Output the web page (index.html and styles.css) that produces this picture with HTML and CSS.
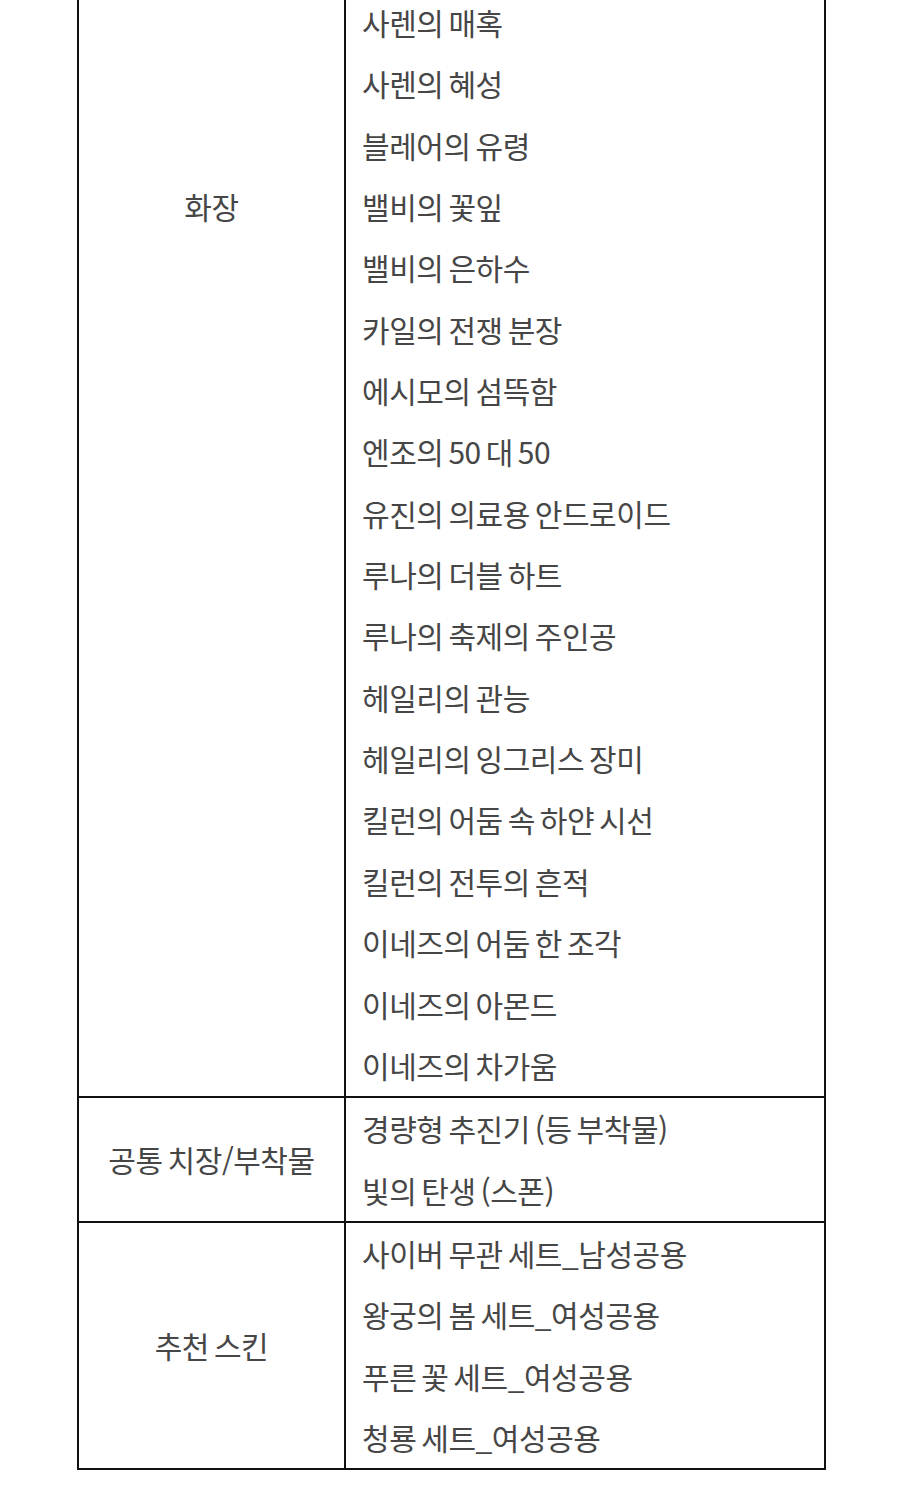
FILE: index.html
```html
<!DOCTYPE html>
<html lang="ko">
<head>
<meta charset="utf-8">
<link rel="stylesheet" href="styles.css">
</head>
<body>
<div class="table">
  <div class="row first">
    <div class="cat">화장</div>
    <div class="items">
      <div class="item">사렌의 매혹</div>
      <div class="item">사렌의 혜성</div>
      <div class="item">블레어의 유령</div>
      <div class="item">밸비의 꽃잎</div>
      <div class="item">밸비의 은하수</div>
      <div class="item">카일의 전쟁 분장</div>
      <div class="item">에시모의 섬뜩함</div>
      <div class="item">엔조의 50 대 50</div>
      <div class="item">유진의 의료용 안드로이드</div>
      <div class="item">루나의 더블 하트</div>
      <div class="item">루나의 축제의 주인공</div>
      <div class="item">헤일리의 관능</div>
      <div class="item">헤일리의 잉그리스 장미</div>
      <div class="item">킬런의 어둠 속 하얀 시선</div>
      <div class="item">킬런의 전투의 흔적</div>
      <div class="item">이네즈의 어둠 한 조각</div>
      <div class="item">이네즈의 아몬드</div>
      <div class="item">이네즈의 차가움</div>
    </div>
  </div>
  <div class="row">
    <div class="cat">공통 치장/부착물</div>
    <div class="items">
      <div class="item">경량형 추진기 (등 부착물)</div>
      <div class="item">빛의 탄생 (스폰)</div>
    </div>
  </div>
  <div class="row">
    <div class="cat">추천 스킨</div>
    <div class="items">
      <div class="item">사이버 무관 세트_남성공용</div>
      <div class="item">왕궁의 봄 세트_여성공용</div>
      <div class="item">푸른 꽃 세트_여성공용</div>
      <div class="item">청룡 세트_여성공용</div>
    </div>
  </div>
</div>
</body>
</html>
```

FILE: styles.css
```css
html, body {
  margin: 0;
  padding: 0;
  background: #ffffff;
}

body {
  font-family: "Noto Sans CJK KR", "Noto Sans", sans-serif;
  color: #464646;
  font-size: 30px;
  letter-spacing: -0.45px;
  word-spacing: -3px;
  overflow: hidden;
}

.table {
  margin: -10px 0 0 77px;
  width: 749px;
  box-sizing: border-box;
  border: 2px solid #111111;
}

.row {
  display: flex;
}

.row + .row {
  border-top: 2px solid #111111;
}

.cat {
  width: 267px;
  flex: none;
  box-sizing: border-box;
  border-right: 2px solid #111111;
  display: flex;
  align-items: center;
  justify-content: center;
  line-height: 61.35px;
}

.first .cat {
  align-items: flex-start;
  padding-top: 184px;
}

.items {
  flex: 1;
  padding-left: 16px;
}

.item {
  height: 61.35px;
  line-height: 61.35px;
  white-space: nowrap;
}
```
